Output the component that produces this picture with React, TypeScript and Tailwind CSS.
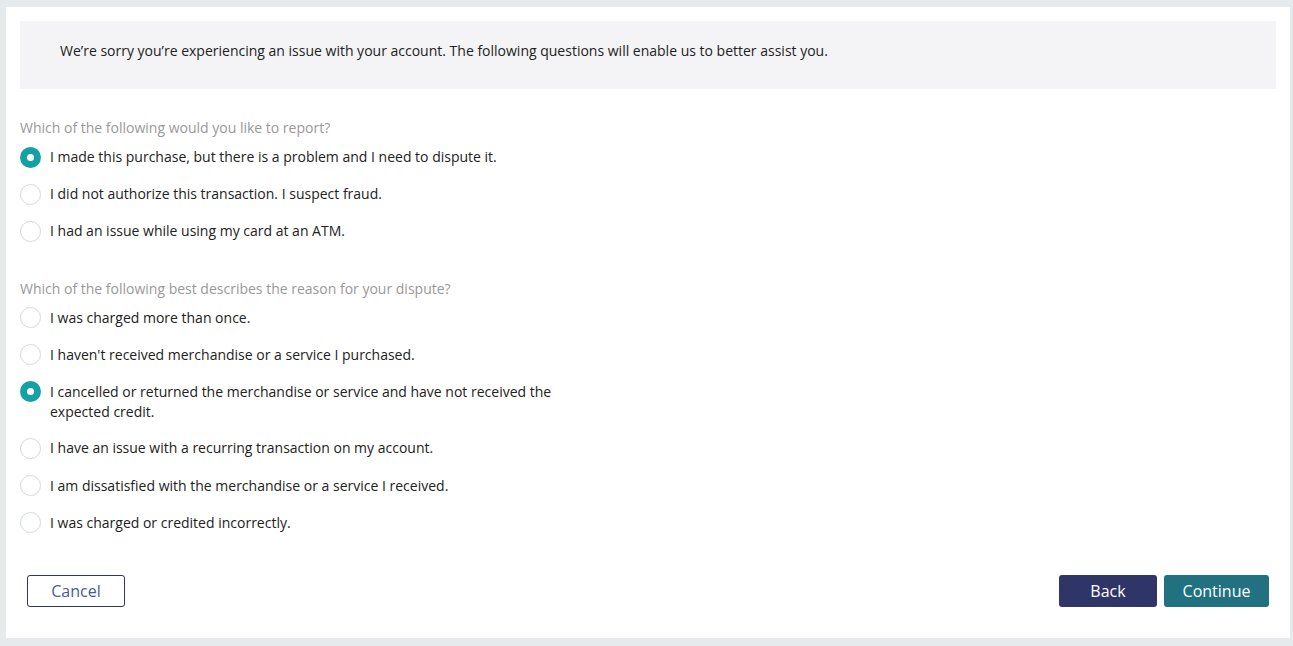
import React, { useState } from "react";

const q1 = [
  "I made this purchase, but there is a problem and I need to dispute it.",
  "I did not authorize this transaction. I suspect fraud.",
  "I had an issue while using my card at an ATM.",
];

const q2 = [
  "I was charged more than once.",
  "I haven't received merchandise or a service I purchased.",
  "I cancelled or returned the merchandise or service and have not received the expected credit.",
  "I have an issue with a recurring transaction on my account.",
  "I am dissatisfied with the merchandise or a service I received.",
  "I was charged or credited incorrectly.",
];

function Radio({ checked }: { checked: boolean }) {
  return checked ? (
    <div className="flex h-[21px] w-[21px] shrink-0 items-center justify-center rounded-full bg-[#13a1a6]">
      <div className="h-[7px] w-[7px] rounded-full bg-white" />
    </div>
  ) : (
    <div className="box-border h-[21px] w-[21px] shrink-0 rounded-full border border-[#d3d9de] bg-white" />
  );
}

function Group({
  label,
  options,
  value,
  onChange,
}: {
  label: string;
  options: string[];
  value: number;
  onChange: (i: number) => void;
}) {
  return (
    <div>
      <div className="text-[14px] leading-[20px] text-[#999999]">{label}</div>
      <div className="mt-[9px] flex flex-col gap-[16.6px]">
        {options.map((o, i) => (
          <div
            key={i}
            className="flex cursor-pointer items-start gap-[9px]"
            onClick={() => onChange(i)}
          >
            <div className="-mt-[0.5px] shrink-0">
              <Radio checked={value === i} />
            </div>
            <div className="max-w-[520px] text-[14px] leading-[20px] text-[#222222]">{o}</div>
          </div>
        ))}
      </div>
    </div>
  );
}

export default function App() {
  const [a, setA] = useState(0);
  const [b, setB] = useState(2);
  return (
    <div
      className="min-h-[646px] bg-[#e6eaed] pb-[8px] pl-[6px] pr-[3px] pt-[7px]"
      style={{ fontFamily: '"Open Sans", "Liberation Sans", sans-serif' }}
    >
      <div className="flex h-[631px] flex-col bg-white px-[14px] pt-[14px]">
        <div className="h-[68px] bg-[#f4f4f6] pl-[40px] pt-[20px]">
          <p className="text-[14px] leading-[20px] text-[#222222]">
            We’re sorry you’re experiencing an issue with your account. The following questions will enable us to better assist you.
          </p>
        </div>
        <div className="mt-[29px]">
          <Group label="Which of the following would you like to report?" options={q1} value={a} onChange={setA} />
        </div>
        <div className="mt-[37px]">
          <Group
            label="Which of the following best describes the reason for your dispute?"
            options={q2}
            value={b}
            onChange={setB}
          />
        </div>
        <div className="mt-[42px] flex items-center justify-between px-[7px]">
          <button className="h-[32px] w-[98px] rounded-[3px] border border-[#2f3566] bg-white text-[16px] text-[#4a5a9c]">
            Cancel
          </button>
          <div className="flex gap-[7px]">
            <button className="h-[32px] w-[98px] rounded-[3px] bg-[#2f3566] text-[16px] text-white">Back</button>
            <button className="h-[32px] w-[105px] rounded-[3px] bg-[#227180] text-[16px] text-white">Continue</button>
          </div>
        </div>
      </div>
    </div>
  );
}
